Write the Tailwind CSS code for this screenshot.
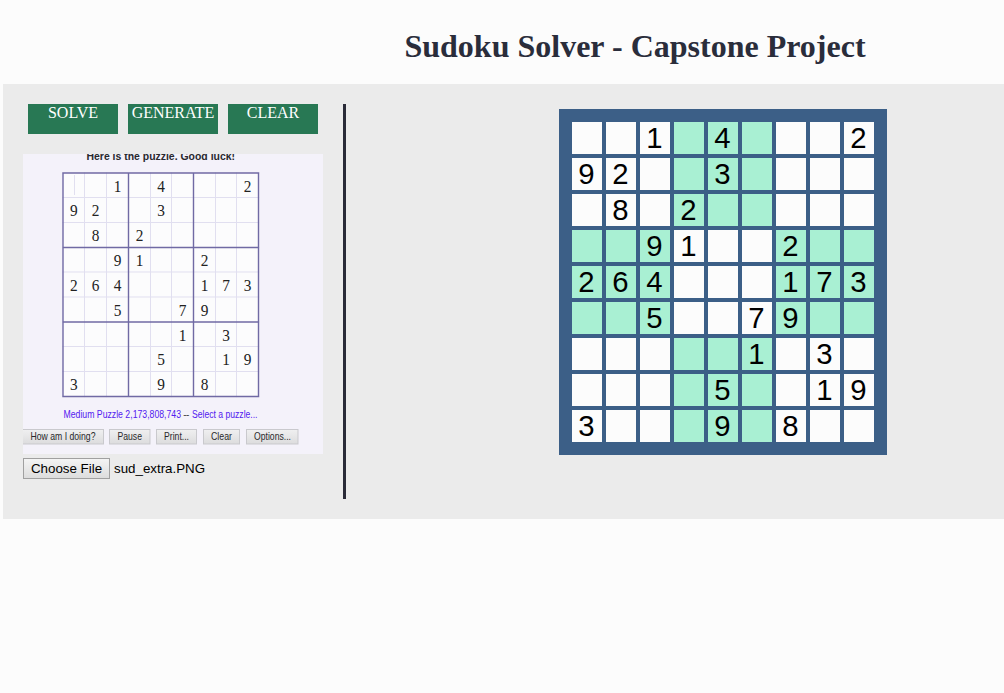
<!DOCTYPE html>
<html lang="en">
<head>
<meta charset="utf-8">
<title>Sudoku Solver</title>
<script src="https://cdn.jsdelivr.net/npm/@tailwindcss/browser@4"></script>
</head>
<body class="h-screen overflow-hidden bg-[#fcfcfc] font-['Liberation_Serif',serif]">
<header class="flex h-[84px] justify-center pt-7 pl-[266px]">
  <h1 class="text-[32px] leading-[37px] font-bold whitespace-nowrap text-[#2a2d3b]">Sudoku Solver - Capstone Project</h1>
</header>
<main class="ml-[3px] flex h-[435px] bg-[#ebebeb] p-5">
  <section class="h-[395px] w-[323px] shrink-0 border-r-[3px] border-[#2a2b38]">
    <nav class="flex gap-[10px] pl-[5px] text-base leading-[18px] text-white">
      <button class="flex h-[30px] w-[90px] items-start justify-center bg-[#287854]">SOLVE</button>
      <button class="flex h-[30px] w-[90px] items-start justify-center bg-[#287854]">GENERATE</button>
      <button class="flex h-[30px] w-[90px] items-start justify-center bg-[#287854]">CLEAR</button>
    </nav>
    <svg class="mt-5 block h-[300px] w-[300px] bg-[#f4f2fa]" viewBox="0 0 300 300" font-family="Liberation Sans, sans-serif">
      <defs><linearGradient id="g" x2="0" y2="1"><stop stop-color="#f0f0f1"/><stop offset="1" stop-color="#dcdcdd"/></linearGradient></defs>
      <text x="63.5" y="6" font-size="11.5" font-weight="bold" fill="#29292e" textLength="148.5" lengthAdjust="spacingAndGlyphs">Here is the puzzle. Good luck!</text>
      <rect x="40" y="19" width="195.5" height="223.5" fill="#fcfcfd"/>
      <g id="lines"></g>
      <g id="digits" font-family="Liberation Serif, serif" font-size="16.5" fill="#222" text-anchor="middle"></g>
      <g font-size="10" fill="#5220f0">
        <text x="40.5" y="263.5" textLength="117.5" lengthAdjust="spacingAndGlyphs">Medium Puzzle 2,173,808,743</text>
        <text x="160.3" y="263.5" fill="#444" textLength="6" lengthAdjust="spacing">--</text>
        <text x="169" y="263.5" textLength="65.5" lengthAdjust="spacingAndGlyphs">Select a puzzle...</text>
      </g>
      <g fill="url(#g)" stroke="#c9c9cd">
        <rect x="-1" y="275.5" width="81.5" height="14.5"/>
        <rect x="86.5" y="275.5" width="40.5" height="14.5"/>
        <rect x="133.5" y="275.5" width="40" height="14.5"/>
        <rect x="180.5" y="275.5" width="36" height="14.5"/>
        <rect x="223.5" y="275.5" width="51.5" height="14.5"/>
      </g>
      <g font-size="10.2" fill="#29292c">
        <text x="7.5" y="286" textLength="65" lengthAdjust="spacingAndGlyphs">How am I doing?</text>
        <text x="94.5" y="286" textLength="24.5" lengthAdjust="spacingAndGlyphs">Pause</text>
        <text x="141" y="286" textLength="25" lengthAdjust="spacingAndGlyphs">Print...</text>
        <text x="188" y="286" textLength="21" lengthAdjust="spacingAndGlyphs">Clear</text>
        <text x="231" y="286" textLength="37" lengthAdjust="spacingAndGlyphs">Options...</text>
      </g>
    </svg>
    <div class="mt-1 flex items-center gap-1 font-['Liberation_Sans',sans-serif] text-[13.333px] leading-[15px] text-black">
      <button class="h-[21px] w-[87px] border border-[#a0a0a0] bg-linear-to-b from-[#f4f4f4] to-[#dddddd] whitespace-nowrap">Choose File</button>
      <span>sud_extra.PNG</span>
    </div>
  </section>
  <section class="pt-[5px] pl-[213px]">
    <div id="board" class="grid h-[346px] w-[328px] grid-cols-[repeat(9,30px)] grid-rows-[repeat(9,32px)] gap-1 bg-[#3c5f87] p-[13px] font-['Liberation_Sans',sans-serif] text-[29.333px] leading-[32px] text-black"></div>
  </section>
</main>
<script>
const rows = ['..1.4...2','92..3....','.8.2.....','..91..2..','264...173','..5..79..','.....1.3.','....5..19','3...9.8..'];
const xs = [40, 61.5, 83.5, 105.5, 127.5, 148.5, 170.5, 192.5, 213.5, 235.5];
const ys = [19, 43.5, 68.5, 93.5, 118, 143, 168, 192.5, 217.5, 242.5];
let cells = '', thin = '', thick = '', digits = '';
rows.forEach((row, r) => [...row].forEach((ch, c) => {
  const d = ch === '.' ? '' : ch;
  const tint = (Math.floor(r / 3) + Math.floor(c / 3)) % 2;
  cells += `<div class="${tint ? 'bg-[#a9f0d3] pr-px text-center' : 'bg-[#fcfcfc] pr-px text-center'}">${d}</div>`;
  if (d) digits += `<text transform="translate(${(xs[c] + xs[c + 1]) / 2} ${ys[r] + 18.5}) scale(.93 1.05)">${d}</text>`;
}));
for (let i = 0; i < 10; i++) {
  const p = `M${xs[i]} 18.25V243.25M39.25 ${ys[i]}H236.25`;
  if (i % 3) thin += p; else thick += p;
}
document.getElementById('board').innerHTML = cells;
document.getElementById('digits').innerHTML = digits;
document.getElementById('lines').innerHTML = `<path d="${thin}M51.5 21V41" stroke="#e1dff0" fill="none"/><path d="${thick}" stroke="#706aa4" stroke-width="1.4" fill="none"/>`;
</script>
</body>
</html>
